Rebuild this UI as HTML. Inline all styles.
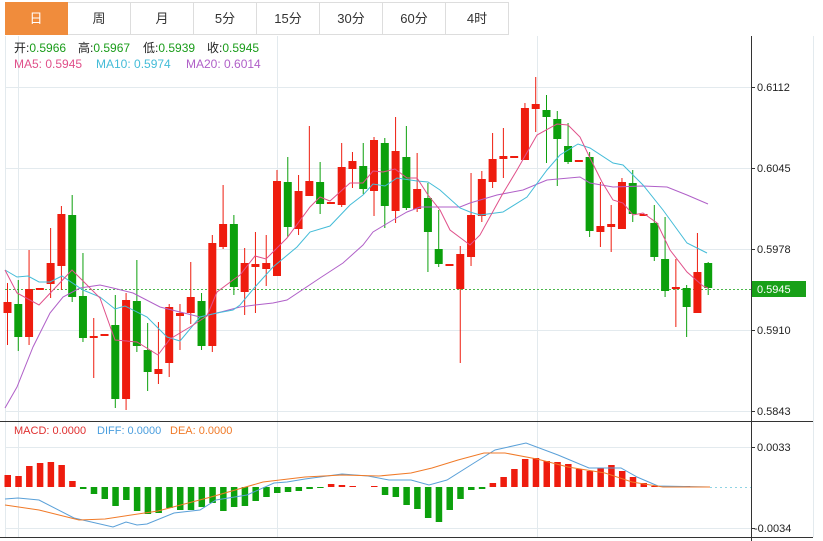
<!DOCTYPE html>
<html><head><meta charset="utf-8"><style>
body{margin:0;background:#fff;width:823px;height:541px;overflow:hidden;font-family:"Liberation Sans","Noto Sans CJK SC",sans-serif}
.tabs{position:absolute;left:5px;top:2px;height:32px;display:flex}
.tab{width:62px;height:31px;border:1px solid #ddd;border-left:none;text-align:center;line-height:31px;font-size:13px;color:#333;box-sizing:content-box}
.tab:first-child{background:#f08c3c;color:#fff;border-color:#f08c3c}
svg{position:absolute;left:0;top:0}
</style></head><body>
<div class="tabs"><div class="tab">日</div><div class="tab">周</div><div class="tab">月</div><div class="tab">5分</div><div class="tab">15分</div><div class="tab">30分</div><div class="tab">60分</div><div class="tab">4时</div></div>
<svg id="s" width="823" height="541" xmlns="http://www.w3.org/2000/svg" font-family="Liberation Sans, Noto Sans CJK SC, sans-serif">
<g stroke="#e3eaee" stroke-width="1">
<line x1="5" y1="87.5" x2="751" y2="87.5"/><line x1="5" y1="168.5" x2="751" y2="168.5"/><line x1="5" y1="249.5" x2="751" y2="249.5"/><line x1="5" y1="330.5" x2="751" y2="330.5"/><line x1="5" y1="411.5" x2="751" y2="411.5"/>
<line x1="5" y1="447.5" x2="751" y2="447.5"/><line x1="5" y1="528.5" x2="751" y2="528.5"/>
<line x1="18.5" y1="36" x2="18.5" y2="537"/><line x1="277.5" y1="36" x2="277.5" y2="537"/><line x1="537.5" y1="36" x2="537.5" y2="537"/>
<line x1="5.5" y1="36" x2="5.5" y2="537"/><line x1="813.5" y1="36" x2="813.5" y2="537"/>
</g>
<g stroke="#333" stroke-width="1">
<line x1="751.5" y1="36" x2="751.5" y2="541"/><line x1="0" y1="421.5" x2="813" y2="421.5"/><line x1="0" y1="537.5" x2="813" y2="537.5"/>
<line x1="751" y1="87.5" x2="755" y2="87.5"/><line x1="751" y1="168.5" x2="755" y2="168.5"/><line x1="751" y1="249.5" x2="755" y2="249.5"/><line x1="751" y1="330.5" x2="755" y2="330.5"/><line x1="751" y1="411.5" x2="755" y2="411.5"/><line x1="751" y1="447.5" x2="755" y2="447.5"/><line x1="751" y1="528.5" x2="755" y2="528.5"/>
</g>
<g font-size="11" fill="#222">
<text x="757" y="91">0.6112</text><text x="757" y="172">0.6045</text><text x="757" y="253">0.5978</text><text x="757" y="334">0.5910</text><text x="757" y="415">0.5843</text><text x="757" y="451">0.0033</text><text x="754" y="532">-0.0034</text>
</g>
<line x1="5" y1="289.5" x2="751" y2="289.5" stroke="#4cb84c" stroke-width="1" stroke-dasharray="2,2" shape-rendering="crispEdges"/>
<line x1="710" y1="487.5" x2="751" y2="487.5" stroke="#8fd4e4" stroke-dasharray="2,3" shape-rendering="crispEdges"/>
<rect x="752" y="281" width="54" height="16" fill="#18a018"/>
<text x="757" y="293" font-size="11" fill="#fff">0.5945</text>
<g id="c"></g>
<g font-size="12">
<text x="14" y="52" fill="#222">开:<tspan fill="#1a9c1a">0.5966</tspan></text>
<text x="78" y="52" fill="#222">高:<tspan fill="#1a9c1a">0.5967</tspan></text>
<text x="143" y="52" fill="#222">低:<tspan fill="#1a9c1a">0.5939</tspan></text>
<text x="207" y="52" fill="#222">收:<tspan fill="#1a9c1a">0.5945</tspan></text>
<text x="14" y="68" fill="#e0508a">MA5: 0.5945</text>
<text x="96" y="68" fill="#44bcd8">MA10: 0.5974</text>
<text x="186" y="68" fill="#b060c8">MA20: 0.6014</text>
<text x="14" y="434" font-size="11" fill="#e03030">MACD: 0.0000</text>
<text x="97" y="434" font-size="11" fill="#4a9ede">DIFF: 0.0000</text>
<text x="170" y="434" font-size="11" fill="#f07a28">DEA: 0.0000</text>
</g>
</svg>
<script>
var R='#ee1c0e',G='#0ca00c';
var C=[['r',302,313,283,345],['g',304,337,280,351],['r',289,337,250,345],['r',288,290,288,290],['r',263,284,228,298],['r',214,266,206,290],['g',215,297,195,302],['g',296,338,253,342],['r',336,338,318,378],['r',334,336,334,336],['g',325,399,295,408],['r',300,399,293,410],['g',301,346,260,352],['g',350,372,323,391],['r',369,374,322,384],['r',307,363,304,377],['r',313,316,304,350],['r',297,313,262,324],['g',301,346,293,350],['r',243,346,235,352],['r',224,247,185,249],['g',224,287,215,295],['r',263,292,248,315],['r',264,267,232,313],['r',263,269,235,286],['r',181,276,170,276],['g',182,227,157,237],['r',191,229,175,235],['r',181,196,126,196],['g',182,204,162,214],['r',202,204,202,204],['r',167,205,143,207],['r',161,169,152,188],['g',166,189,143,194],['r',140,191,137,216],['g',143,206,138,228],['r',151,211,117,223],['g',157,208,126,210],['r',189,209,153,212],['g',198,232,183,272],['g',249,264,210,267],['r',264,266,264,266],['r',254,289,246,363],['r',215,257,173,266],['r',179,216,171,222],['r',159,182,133,188],['r',156,159,128,178],['r',156,158,156,158],['r',108,160,103,160],['r',104,109,77,132],['g',110,117,95,163],['g',119,139,111,186],['g',146,162,123,164],['r',160,162,160,162],['g',157,231,152,237],['r',226,232,182,247],['r',224,227,205,252],['r',182,229,178,229],['g',183,214,170,222],['r',214,216,214,216],['g',223,257,205,261],['g',259,291,217,297],['r',287,289,259,327],['g',288,307,285,337],['r',272,313,233,313],['g',263,288,262,295]];
var M=[475,476,466,463,462,465,481,489,494,499,506,500,511,514,513,508,510,510,507,503,511,507,506,501,497,493,492,491,489,488,484,485,486,487,486,495,497,505,509,518,522,510,499,490,489,483,477,469,459,458,461,462,464,469,471,468,465,471,477,483,486,487,487,486,487,487];
var ma5=[[5,270],[17,293],[39,305],[72,270],[100,298],[115,340],[137,342],[158,355],[170,339],[190,327],[207,316],[217,292],[233,280],[240,275],[255,256],[266,259],[287,238],[310,207],[320,197],[330,201],[350,183],[363,183],[373,171],[383,172],[395,169],[407,178],[417,178],[428,195],[440,210],[450,230],[470,245],[480,235],[502,195],[517,170],[537,135],[557,124],[568,125],[580,137],[590,158],[602,182],[613,200],[623,203],[633,215],[643,213],[657,223],[670,250],[687,272],[703,286],[708,288]];
var ma10=[[5,270],[17,277],[28,276],[39,282],[50,282],[62,276],[83,290],[100,297],[115,309],[125,306],[147,317],[167,337],[180,341],[200,317],[217,313],[233,310],[240,305],[255,287],[273,267],[297,247],[310,232],[330,226],[350,205],[363,195],[373,184],[385,186],[397,178],[417,181],[428,182],[440,190],[460,208],[470,212],[480,215],[503,212],[527,197],[547,170],[560,155],[578,144],[590,148],[613,163],[623,165],[643,185],[663,210],[687,243],[707,253]];
var ma20=[[5,408],[17,387],[33,347],[50,313],[63,297],[80,288],[100,285],[113,288],[133,293],[160,307],[180,312],[200,317],[217,313],[240,307],[255,305],[273,303],[287,300],[320,278],[343,263],[363,245],[373,232],[393,220],[407,212],[420,207],[440,207],[460,207],[470,203],[497,195],[523,190],[547,180],[580,177],[590,183],[613,187],[643,186],[667,187],[687,195],[708,204]];
var dif=[[5,499],[18,498],[39,500],[74,518],[113,527],[126,522],[137,525],[147,524],[174,513],[200,510],[216,500],[247,495],[274,483],[287,482],[305,479],[342,474],[368,476],[389,480],[411,480],[429,485],[447,480],[474,463],[495,450],[526,443],[558,455],[589,468],[621,468],[637,477],[658,486],[710,487]];
var dea=[[5,505],[39,510],[79,520],[105,519],[158,511],[211,497],[263,482],[305,477],[342,475],[379,476],[411,473],[432,468],[458,460],[484,453],[505,453],[537,459],[568,467],[605,473],[632,482],[663,487],[710,487]];
var h='';
for(var i=0;i<C.length;i++){var c=C[i],x=7.5+i*10.78,col=c[0]=='r'?R:G;
h+='<line x1="'+x+'" y1="'+c[3]+'" x2="'+x+'" y2="'+c[4]+'" stroke="'+col+'" stroke-width="1"/>';
var bh=Math.max(2,c[2]-c[1]);h+='<rect x="'+(x-4)+'" y="'+c[1]+'" width="8" height="'+bh+'" fill="'+col+'"/>';}
for(var i=0;i<M.length;i++){var x=7.5+i*10.78,v=M[i],z=487;if(Math.abs(v-z)<1)continue;
h+='<rect x="'+(x-3)+'" y="'+Math.min(v,z)+'" width="6.5" height="'+Math.abs(v-z)+'" fill="'+(v<z?R:G)+'"/>';}
function pl(p,c){return '<polyline fill="none" stroke="'+c+'" stroke-width="1" points="'+p.map(function(a){return a.join(',')}).join(' ')+'"/>';}
h+=pl(ma20,'#b060c8')+pl(ma10,'#44bcd8')+pl(ma5,'#e0508a')+pl(dif,'#5aa0d8')+pl(dea,'#f07a28');
document.getElementById('c').innerHTML=h;
</script>
</body></html>
